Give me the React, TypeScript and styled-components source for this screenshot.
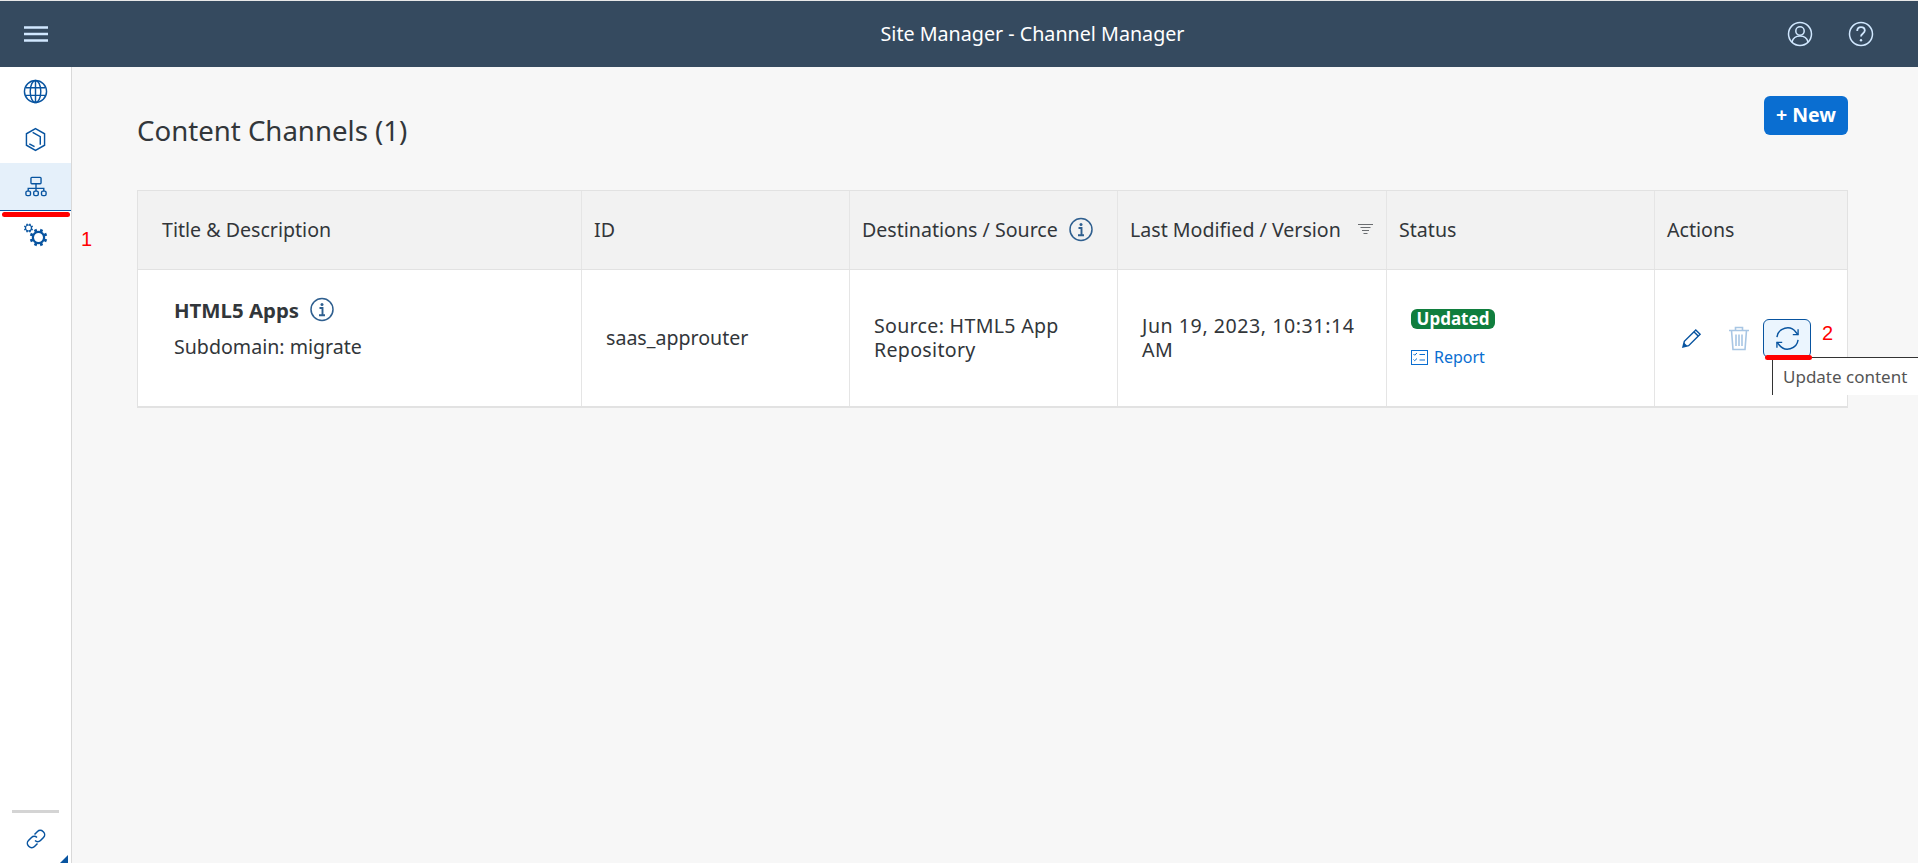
import React from 'react';
import styled, { createGlobalStyle } from 'styled-components';

const GlobalStyle = createGlobalStyle`
  html, body {
    margin: 0;
    padding: 0;
    height: 100%;
    overflow: hidden;
    background: #f7f7f7;
  }
  body {
    font-family: "Noto Sans", "Open Sans", Arial, sans-serif;
    color: #32363a;
  }
`;

const Page = styled.div`
  width: 1918px;
  height: 863px;
  display: flex;
  flex-direction: column;
  overflow: hidden;
  background: #f7f7f7;
`;

const ShellBar = styled.header`
  height: 67px;
  flex: none;
  box-sizing: border-box;
  border-top: 1px solid #e8e8e8;
  background: #354a5f;
  display: flex;
  align-items: center;
  padding: 0 44px 0 24px;
  color: #d1e8ff;
`;

const ShellTitle = styled.div`
  flex: 1;
  text-align: center;
  color: #fff;
  font-size: 19.7px;
  padding: 0 0 1px 230px;
`;

const ShellIcons = styled.div`
  display: flex;
  gap: 35px;
`;

const Body = styled.div`
  flex: 1;
  display: flex;
  min-height: 0;
`;

const SideNav = styled.nav`
  width: 72px;
  flex: none;
  box-sizing: border-box;
  background: #fff;
  border-right: 1px solid #d9d9d9;
  display: flex;
  flex-direction: column;
  position: relative;
  color: #0854a0;
`;

const NavItem = styled.div<{ $active?: boolean }>`
  height: 48px;
  flex: none;
  box-sizing: border-box;
  display: flex;
  align-items: center;
  justify-content: center;
  background: ${(p) => (p.$active ? '#e5f0fa' : 'transparent')};
  border-bottom: ${(p) => (p.$active ? '1px solid #0854a0' : 'none')};
`;

const NavSpacer = styled.div`
  flex: 1;
`;

const NavDivider = styled.div`
  height: 3px;
  margin: 0 12px;
  background: #d4d4d4;
`;

const NavFooter = styled.div`
  height: 50px;
  display: flex;
  align-items: center;
  justify-content: center;
  padding-top: 2px;
  box-sizing: border-box;
`;

const Corner = styled.div`
  position: absolute;
  right: 3px;
  bottom: 0;
  width: 0;
  height: 0;
  border-style: solid;
  border-width: 0 0 8px 8px;
  border-color: transparent transparent #0854a0 transparent;
`;

const RedLine = styled.div`
  position: absolute;
  background: #f00;
  border-radius: 3px;
  height: 5px;
`;

const NavRedLine = styled(RedLine)`
  left: 2px;
  right: 1px;
  top: 145px;
`;

const RedNumber = styled.div`
  position: absolute;
  color: #f00;
  font-size: 20px;
  line-height: 24px;
  font-family: "Liberation Sans", Arial, sans-serif;
`;

const NavNumber = styled(RedNumber)`
  left: 81px;
  top: 160px;
`;

const Main = styled.main`
  flex: 1;
  min-width: 0;
  padding: 29px 70px 0 65px;
`;

const TitleRow = styled.div`
  height: 94px;
  display: flex;
  justify-content: space-between;
  align-items: flex-start;
`;

const PageTitle = styled.h1`
  margin: 12px 0 0;
  font-size: 27.6px;
  line-height: 44px;
  font-weight: 400;
  color: #32363a;
`;

const NewButton = styled.button`
  width: 84px;
  height: 39px;
  border: none;
  border-radius: 6px;
  background: #0a6ed1;
  color: #fff;
  font-family: inherit;
  font-size: 19.5px;
  font-weight: 700;
  padding: 0 0 2px;
`;

const Table = styled.div`
  box-sizing: border-box;
  border: 1px solid #e2e2e2;
  border-bottom-width: 2px;
`;

const Row = styled.div<{ $head?: boolean }>`
  display: grid;
  grid-template-columns: 443px 268px 268px 269px 268px 193px;
  box-sizing: border-box;
  height: ${(p) => (p.$head ? '79px' : '136px')};
  background: ${(p) => (p.$head ? '#f2f2f2' : '#fff')};
  border-bottom: ${(p) => (p.$head ? '1px solid #e2e2e2' : 'none')};
`;

const HeadCell = styled.div<{ $first?: boolean }>`
  display: flex;
  align-items: center;
  gap: 11px;
  padding: 0 0 2px ${(p) => (p.$first ? '24px' : '12px')};
  font-size: 19.6px;
  border-left: ${(p) => (p.$first ? 'none' : '1px solid #e5e5e5')};
  white-space: nowrap;
`;

const Cell = styled.div<{ $first?: boolean }>`
  position: relative;
  display: flex;
  flex-direction: column;
  justify-content: center;
  box-sizing: border-box;
  padding: 0 24px;
  font-size: 19.6px;
  line-height: 24px;
  border-left: ${(p) => (p.$first ? 'none' : '1px solid #e5e5e5')};
`;

const TitleCell = styled(Cell)`
  padding: 0 0 20px 36px;
`;

const SourceCell = styled(Cell)`
  letter-spacing: 0.3px;
`;

const DateCell = styled(Cell)`
  letter-spacing: 0.55px;
`;

const ChannelName = styled.div`
  display: flex;
  align-items: center;
  gap: 11px;
  font-size: 20.4px;
  font-weight: 700;
  margin-bottom: 13px;
`;

const Badge = styled.span`
  align-self: flex-start;
  height: 20px;
  width: 84px;
  border-radius: 6px;
  background: #107e3e;
  color: #fff;
  font-size: 17px;
  font-weight: 700;
  line-height: 20px;
  text-align: center;
`;

const ReportLink = styled.a`
  display: flex;
  align-items: center;
  gap: 6px;
  margin-top: 16px;
  font-size: 16px;
  color: #0a6ed1;
`;

const StatusCell = styled(Cell)`
  padding-top: 2px;
`;

const ActionsCell = styled(Cell)`
  flex-direction: row;
  justify-content: flex-start;
  align-items: center;
  padding: 0 0 0 23px;
`;

const ActionButton = styled.div<{ $faded?: boolean }>`
  width: 26px;
  display: flex;
  justify-content: center;
  margin-right: 22px;
  color: ${(p) => (p.$faded ? '#a8c6e4' : '#0854a0')};
`;

const RefreshButton = styled.div`
  position: relative;
  width: 48px;
  height: 39px;
  margin-left: -11px;
  box-sizing: border-box;
  border: 1px solid #0854a0;
  border-radius: 6px;
  background: #ebf5fe;
  color: #0854a0;
  display: flex;
  align-items: center;
  justify-content: center;
`;

const Tooltip = styled.div`
  position: absolute;
  left: 8px;
  top: 37px;
  width: 160px;
  height: 38px;
  box-sizing: border-box;
  background: #fff;
  border-top: 1px solid #333;
  border-left: 1px solid #333;
  padding: 7px 0 0 10px;
  font-size: 17px;
  line-height: 24px;
  color: #555;
  white-space: nowrap;
`;

const ActionRedLine = styled(RedLine)`
  left: 1px;
  top: 35px;
  width: 47px;
`;

const ActionNumber = styled(RedNumber)`
  left: 58px;
  top: 1px;
`;

const Svg = styled.svg`
  display: block;
  flex: none;
  fill: none;
  stroke: currentColor;
  stroke-width: 1.5;
`;

const GlobeIcon = () => (
  <Svg width="25" height="25" viewBox="0 0 26 26">
    <circle cx="13" cy="13" r="11.5" />
    <ellipse cx="13" cy="13" rx="5.5" ry="11.5" />
    <path d="M13 1.5v23M2.5 9h21M2.5 17h21" />
  </Svg>
);

const CubeIcon = () => (
  <Svg width="21" height="25" viewBox="0 0 22 26">
    <path d="M11 1.5l9.5 5.5v12L11 24.5 1.5 19V7z" />
    <path d="M8 5.5l8 4.5v8.5M4.5 17.5l5.5 3" />
  </Svg>
);

const OrgIcon = () => (
  <Svg width="22" height="21" viewBox="0 0 24 22">
    <rect x="6.5" y="1" width="11" height="7" rx="1" />
    <path d="M12 8v5M3.5 16v-3h17v3M12 13v3" />
    <rect x="1" y="16" width="5" height="5" rx="1.5" />
    <rect x="9.5" y="16" width="5" height="5" rx="1.5" />
    <rect x="18" y="16" width="5" height="5" rx="1.5" />
  </Svg>
);

const gearPath = (cx: number, cy: number, r: number, len: number) =>
  Array.from({ length: 8 })
    .map((_, i) => {
      const a = (i * Math.PI) / 4 + Math.PI / 8;
      const x1 = cx + Math.cos(a) * r;
      const y1 = cy + Math.sin(a) * r;
      const x2 = cx + Math.cos(a) * (r + len);
      const y2 = cy + Math.sin(a) * (r + len);
      return `M${x1.toFixed(2)} ${y1.toFixed(2)}L${x2.toFixed(2)} ${y2.toFixed(2)}`;
    })
    .join('');

const GearsIcon = () => (
  <Svg width="25" height="24" viewBox="0 0 25 24">
    <circle cx="5.5" cy="5" r="3" strokeWidth="1.2" />
    <path d={gearPath(5.5, 5, 3, 1.6)} strokeWidth="1.5" />
    <circle cx="15.5" cy="14.5" r="5.6" strokeWidth="2.2" />
    <path d={gearPath(15.5, 14.5, 6, 2.8)} strokeWidth="2.8" />
  </Svg>
);

const LinkIcon = () => (
  <Svg width="22" height="22" viewBox="0 0 22 22">
    <path d="M9.5 6.5l3-3a3.9 3.9 0 0 1 5.5 0l.5.5a3.9 3.9 0 0 1 0 5.5l-3 3a3.9 3.9 0 0 1-5.5 0" />
    <path d="M12.5 15.5l-3 3a3.9 3.9 0 0 1-5.5 0l-.5-.5a3.9 3.9 0 0 1 0-5.5l3-3a3.9 3.9 0 0 1 5.5 0" />
  </Svg>
);

const MenuIcon = () => (
  <Svg width="24" height="16" viewBox="0 0 24 16">
    <path d="M0 1.5h24M0 8h24M0 14.5h24" strokeWidth="2.6" />
  </Svg>
);

const UserIcon = () => (
  <Svg width="26" height="26" viewBox="0 0 26 26">
    <circle cx="13" cy="13" r="11.5" />
    <circle cx="13" cy="10" r="4.2" />
    <path d="M5 21c1-4 4-6 8-6s7 2 8 6" />
  </Svg>
);

const HelpIcon = () => (
  <Svg width="26" height="26" viewBox="0 0 26 26">
    <circle cx="13" cy="13" r="11.5" />
    <path d="M9.2 10c0-2.4 1.7-3.8 3.8-3.8s3.8 1.4 3.8 3.4c0 3-3.8 2.8-3.8 6" strokeWidth="1.8" />
    <circle cx="13" cy="19.3" r="1.2" fill="currentColor" stroke="none" />
  </Svg>
);

const InfoIcon = () => (
  <Svg width="24" height="25" viewBox="0 0 24 25" style={{ color: '#2f5f8f' }}>
    <circle cx="12" cy="12.5" r="11" />
    <circle cx="12" cy="7.6" r="1.5" fill="currentColor" stroke="none" />
    <path d="M9.5 11h3v7M9 18.2h6" strokeWidth="1.9" />
  </Svg>
);

const SortIcon = () => (
  <Svg width="15" height="12" viewBox="0 0 15 12" style={{ color: '#6a6d70', marginLeft: 6 }}>
    <path d="M0 1.5h15M2.5 4.5h10M4 7.5h7M5.5 10.5h4" strokeWidth="1" />
  </Svg>
);

const ReportIcon = () => (
  <Svg width="17" height="15" viewBox="0 0 17 15">
    <rect x="0.5" y="0.5" width="16" height="14" strokeWidth="1" />
    <path d="M2.5 4l1.2 1.2L6 3M2.5 9.5l1.2 1.2L6 8.5M8.5 4.5H14M8.5 10H14" strokeWidth="1" />
  </Svg>
);

const PencilIcon = () => (
  <Svg width="21" height="21" viewBox="0 0 22 22">
    <path d="M2 20l1.5-6L15.5 2l4.5 4.5L8 18.5z" />
    <path d="M13.5 4l4.5 4.5" />
    <path d="M2 20l1.3-4.6 3.3 3.3z" fill="currentColor" stroke="none" />
  </Svg>
);

const TrashIcon = () => (
  <Svg width="22" height="25" viewBox="0 0 22 25">
    <path
      d="M1 4.5h20M7.5 4.5V1.5h7v3M3.5 4.5l1.5 19h12l1.5-19M8 8.5V20M11 8.5V20M14 8.5V20"
      strokeWidth="1.6"
    />
  </Svg>
);

const RefreshIcon = () => (
  <Svg width="25" height="25" viewBox="0 0 26 26">
    <path d="M2 11.5A11 11 0 0 1 21.8 6.5L24 9" />
    <path d="M24 3.5V9h-5.5" strokeWidth="1.4" />
    <path d="M24 14.5A11 11 0 0 1 4.2 19.5L2 17" />
    <path d="M2 22.5V17h5.5" strokeWidth="1.4" />
  </Svg>
);

export default function App() {
  return (
    <Page>
      <GlobalStyle />
      <ShellBar>
        <MenuIcon />
        <ShellTitle>Site Manager - Channel Manager</ShellTitle>
        <ShellIcons>
          <UserIcon />
          <HelpIcon />
        </ShellIcons>
      </ShellBar>
      <Body>
        <SideNav>
          <NavItem><GlobeIcon /></NavItem>
          <NavItem><CubeIcon /></NavItem>
          <NavItem $active><OrgIcon /></NavItem>
          <NavItem><GearsIcon /></NavItem>
          <NavSpacer />
          <NavDivider />
          <NavFooter><LinkIcon /></NavFooter>
          <Corner />
          <NavRedLine />
          <NavNumber>1</NavNumber>
        </SideNav>
        <Main>
          <TitleRow>
            <PageTitle>Content Channels (1)</PageTitle>
            <NewButton>+ New</NewButton>
          </TitleRow>
          <Table>
            <Row $head>
              <HeadCell $first>Title &amp; Description</HeadCell>
              <HeadCell>ID</HeadCell>
              <HeadCell>Destinations / Source <InfoIcon /></HeadCell>
              <HeadCell>Last Modified / Version <SortIcon /></HeadCell>
              <HeadCell>Status</HeadCell>
              <HeadCell>Actions</HeadCell>
            </Row>
            <Row>
              <TitleCell $first>
                <ChannelName>HTML5 Apps <InfoIcon /></ChannelName>
                <div>Subdomain: migrate</div>
              </TitleCell>
              <Cell>saas_approuter</Cell>
              <SourceCell>Source: HTML5 App Repository</SourceCell>
              <DateCell>Jun 19, 2023, 10:31:14 AM</DateCell>
              <StatusCell>
                <Badge>Updated</Badge>
                <ReportLink><ReportIcon /> Report</ReportLink>
              </StatusCell>
              <ActionsCell>
                <ActionButton><PencilIcon /></ActionButton>
                <ActionButton $faded><TrashIcon /></ActionButton>
                <RefreshButton>
                  <RefreshIcon />
                  <Tooltip>Update content</Tooltip>
                  <ActionRedLine />
                  <ActionNumber>2</ActionNumber>
                </RefreshButton>
              </ActionsCell>
            </Row>
          </Table>
        </Main>
      </Body>
    </Page>
  );
}
